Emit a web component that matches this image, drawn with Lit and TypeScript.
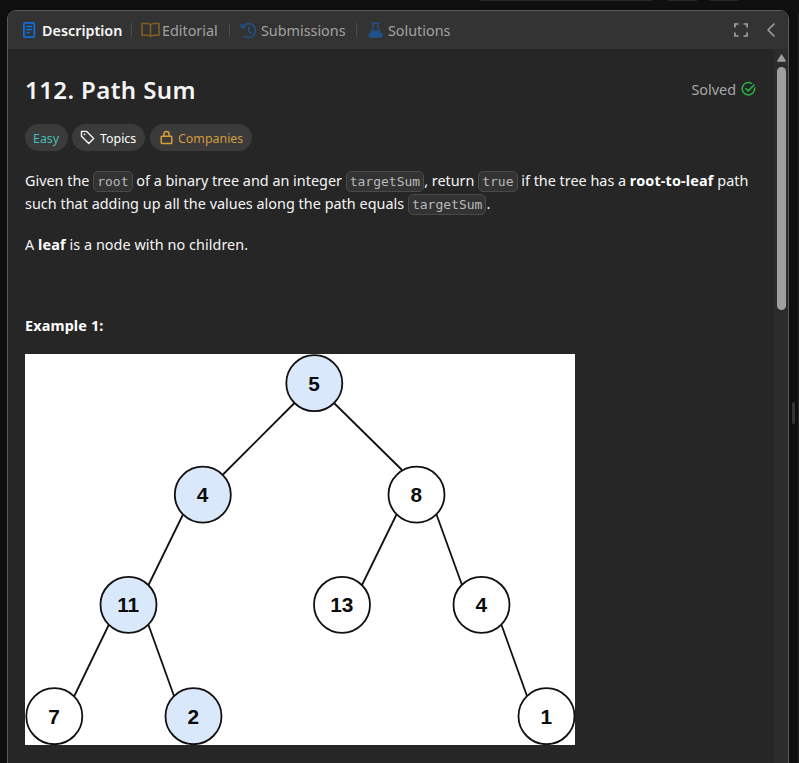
import { LitElement, html, svg, css } from "lit";
import { customElement } from "lit/decorators.js";

interface TreeNode { label: string; x: number; y: number; onPath: boolean }

const NODES: TreeNode[] = [
  { label: "5", x: 289.3, y: 29.2, onPath: true },
  { label: "4", x: 177.8, y: 140.6, onPath: true },
  { label: "8", x: 391.5, y: 140.6, onPath: false },
  { label: "11", x: 103.5, y: 250.8, onPath: true },
  { label: "13", x: 317, y: 250.8, onPath: false },
  { label: "4", x: 456.5, y: 250.8, onPath: false },
  { label: "7", x: 29.3, y: 362.2, onPath: false },
  { label: "2", x: 168.5, y: 362.2, onPath: true },
  { label: "1", x: 521.5, y: 362.2, onPath: false },
];

const EDGES = [
  [269.5, 49, 198, 120.5], [309, 49, 377, 116],
  [158, 160.5, 123.5, 231], [371.5, 160.5, 337, 231],
  [411.5, 160.5, 437, 231], [83.7, 271, 49.3, 342],
  [123.5, 271, 149, 342], [476.5, 271, 502, 342],
];

@customElement("binary-tree")
export class BinaryTree extends LitElement {
  static styles = css`
    :host { display: block; width: 550px; height: 391px; background: #fff; }
    svg { display: block; }
    .edge { stroke: #111; stroke-width: 1.8; }
    .node { fill: #fff; stroke: #111; stroke-width: 1.8; }
    .node.on { fill: #dae8fc; }
    .num { font: bold 20.8px "Liberation Sans", Arial, sans-serif; fill: #0c0c0c; text-anchor: middle; }
  `;
  render() {
    return html`<svg width="550" height="391" viewBox="0 0 550 391">
      ${EDGES.map(([a, b, c, d]) => svg`<line class="edge" x1=${a} y1=${b} x2=${c} y2=${d} />`)}
      ${NODES.map((n) => svg`<circle class=${n.onPath ? "node on" : "node"} cx=${n.x} cy=${n.y} r="28" />
        <text class="num" x=${n.x - 0.3} y=${n.y + 7.6}>${n.label}</text>`)}
    </svg>`;
  }
}

@customElement("app-root")
export class AppRoot extends LitElement {
  static styles = css`
    :host { display: block; position: relative; width: 799px; height: 763px; overflow: hidden; background: #0f0f0f;
      font-family: "Noto Sans", "Open Sans", sans-serif; color: #f5f5f5; }
    * { box-sizing: border-box; }
    svg { display: block; flex: none; }
    .sliver { position: absolute; top: 0; height: 1px; background: #262626; }
    .s1 { left: 480px; width: 172px; }
    .s2 { left: 668px; width: 29px; }
    .s3 { left: 709px; width: 30px; }
    .next { position: absolute; left: 798px; top: 14px; width: 1px; height: 749px; background: #222; }
    .grip { position: absolute; left: 792px; top: 402px; width: 3px; height: 22px; border-radius: 2px; background: #333; }
    .panel { margin: 10px 0 0 7px; width: 782px; height: 763px; border: 1px solid #5a5a5a; border-radius: 9px;
      background: #262626; overflow: hidden; display: flex; flex-direction: column; }
    .tabs { height: 38px; flex: none; background: #333; display: flex; align-items: center; padding: 0 12px 0 14px; }
    .tab { display: flex; align-items: center; font-size: 14.35px; line-height: 20px; color: #a2a2a2; white-space: nowrap; }
    .tab span { margin-top: 1px; }
    .tab.active { color: #f8f8f8; font-weight: 600; }
    .t1 { width: 109px; } .t2 { width: 97px; } .t3 { width: 126px; }
    .t1 svg { margin-right: 6px; }
    .t2 svg { margin: 0 2px 0 9px; }
    .t3 svg { margin: 0 4px 0 10px; }
    .t4 svg { margin: 0 5px 0 11px; }
    .rule { width: 1px; height: 14px; background: #4b4b4b; }
    .tools { margin-left: auto; display: flex; align-items: center; gap: 17px; }
    .main { flex: 1; display: flex; min-height: 0; }
    .content { flex: 1; padding: 0 17px; }
    .head { display: flex; justify-content: space-between; align-items: center; height: 34px; margin-top: 24px; }
    h1 { margin: 0; font-size: 24px; line-height: 34px; font-weight: 600; letter-spacing: 0.4px; }
    .solved { display: flex; align-items: center; gap: 5px; font-size: 14.4px; color: #a8a8a8; padding-right: 1px; }
    .solved span { margin-top: -2px; }
    .solved svg { margin-top: -2px; }
    .pills { display: flex; margin-top: 17px; height: 27px; }
    .pill { display: flex; align-items: center; height: 27px; border-radius: 14px; background: #3b3b3b; font-size: 12.4px; white-space: nowrap; }
    .pill span { margin-top: 1px; }
    .easy { width: 43px; margin-right: 4px; padding-left: 8px; color: #46bdb4; }
    .topics { width: 73px; margin-right: 5px; padding-left: 8px; gap: 5px; color: #fff; }
    .companies { width: 102px; padding-left: 10px; gap: 5px; color: #d29a3c; }
    .body { margin-top: 18px; font-size: 14.4px; line-height: 23px; color: #f5f5f5; white-space: nowrap; }
    .body p { margin: 0; height: 23px; display: flex; align-items: center; white-space: pre; }
    .body p.loose { letter-spacing: 0.02px; }
    .body p.gap { margin-top: 18px; letter-spacing: 0.05px; }
    .body p.example { margin-top: 58px; }
    code { font: 13px/16px "DejaVu Sans Mono", monospace; letter-spacing: 0; color: #b9b9b9; background: #333; border: 1px solid #4a4a4a;
      border-radius: 5px; padding: 2px 3px 1px; height: 21px; margin-top: 1px; }
    b { font-weight: 700; color: #fff; letter-spacing: 0.15px; }
    binary-tree { margin-top: 17px; }
    .scroll { width: 14px; flex: none; background: #2c2c2c; padding: 5px 2px 0 3px; }
    .thumb { width: 9px; height: 243px; margin-top: 5px; border-radius: 5px; background: #9f9f9f; }
  `;
  render() {
    return html`
      <div class="sliver s1"></div><div class="sliver s2"></div><div class="sliver s3"></div>
      <div class="next"></div><div class="grip"></div>
      <section class="panel">
        <nav class="tabs">
          <div class="tab active t1">
            <svg width="14" height="16" viewBox="0 0 14 16" fill="none" stroke="#0f6fdc" stroke-width="1.8"><rect x="1.9" y="0.9" width="10.4" height="14.2" rx="1.4"/><path d="M4.2 4.5h5.8M4.2 7.5h5.8M4.2 10.5h3.6" stroke-width="1.3"/></svg>
            <span>Description</span>
          </div>
          <i class="rule"></i>
          <div class="tab t2">
            <svg width="19" height="16" viewBox="0 0 19 16" fill="none" stroke="#80601c" stroke-width="1.6" stroke-linejoin="round"><path d="M9.5 3.2C8.8 2 7.8 1.5 6.4 1.5H1v11.7h5.5c1.5 0 2.4.4 3 1.4.6-1 1.5-1.4 3-1.4H18V1.5h-5.4c-1.4 0-2.4.5-3.1 1.7zM9.5 3.2v11"/></svg>
            <span>Editorial</span>
          </div>
          <i class="rule"></i>
          <div class="tab t3">
            <svg width="17" height="17" viewBox="0 0 17 17" fill="none" stroke="#20528a" stroke-width="1.5" stroke-linecap="round" stroke-linejoin="round"><path d="M2.2 5.2A7 7 0 1 1 4.2 14.1M1 2.2l.9 3.5 3.5-.9M8.7 5.2v4l2.3 2"/></svg>
            <span>Submissions</span>
          </div>
          <i class="rule"></i>
          <div class="tab t4">
            <svg width="15" height="16" viewBox="0 0 15 16" fill="none" stroke="#20528a" stroke-width="1.4" stroke-linejoin="round"><path d="M3.5 1h8M5 1v5.5L1.2 13.2Q.6 15 2.3 15h10.4Q14.4 15 13.8 13.2L10 6.5V1"/><path d="M4 8.6h7l2.8 5.4-1 1H2.2l-1-1z" fill="#20528a" stroke="none"/></svg>
            <span>Solutions</span>
          </div>
          <div class="tools">
            <svg width="16" height="16" viewBox="0 0 16 16" fill="none" stroke="#a0a0a0" stroke-width="1.7"><path d="M1.9 5.5V2h3.6M10.5 2h3.6v3.5M14.1 10.5V14h-3.6M5.5 14H1.9v-3.5"/></svg>
            <svg width="10" height="16" viewBox="0 0 10 16" fill="none" stroke="#a0a0a0" stroke-width="1.6" stroke-linecap="round" stroke-linejoin="round"><path d="M8 2L2 8l6 6"/></svg>
          </div>
        </nav>
        <div class="main">
          <article class="content">
            <header class="head"><h1>112. Path Sum</h1>
              <div class="solved"><span>Solved</span><svg width="15" height="16" viewBox="0 0 15 16" fill="none" stroke="#28b544" stroke-width="1.5" stroke-linecap="round" stroke-linejoin="round"><path d="M10.5 2.3A6.2 6.2 0 1 0 13.6 7M4.8 7.5l2.4 2.4L13 4"/></svg></div>
            </header>
            <div class="pills">
              <div class="pill easy"><span>Easy</span></div>
              <div class="pill topics"><svg width="15" height="15" viewBox="0 0 15 15" fill="none" stroke="#f3f3f3" stroke-width="1.4" stroke-linejoin="round"><path d="M1.5 1.4h5.2l7 7-5 5-7.2-7.2z"/><circle cx="4.6" cy="4.3" r=".9" fill="#f3f3f3" stroke="none"/></svg><span>Topics</span></div>
              <div class="pill companies"><svg width="13" height="15" viewBox="0 0 13 15" fill="none" stroke="#d99d3a" stroke-width="1.5" stroke-linejoin="round"><rect x="1.2" y="6.2" width="10.6" height="7.2" rx=".8"/><path d="M3.9 6V4.1a2.6 2.6 0 0 1 5.2 0V6"/></svg><span>Companies</span></div>
            </div>
            <div class="body">
              <p><span>Given the </span><code>root</code><span> of a binary tree and an integer </span><code>targetSum</code><span>, return </span><code>true</code><span> if the tree has a </span><b>root-to-leaf</b><span> path</span></p>
              <p class="loose"><span>such that adding up all the values along the path equals </span><code>targetSum</code><span>.</span></p>
              <p class="gap"><span>A </span><b>leaf</b><span> is a node with no children.</span></p>
              <p class="example"><b>Example 1:</b></p>
            </div>
            <binary-tree></binary-tree>
          </article>
          <div class="scroll"><svg width="9" height="8" viewBox="0 0 9 8"><path d="M4.5 1L8.2 7H.8z" fill="#9f9f9f" stroke="#9f9f9f" stroke-width="1.4" stroke-linejoin="round"/></svg><div class="thumb"></div></div>
        </div>
      </section>`;
  }
}
